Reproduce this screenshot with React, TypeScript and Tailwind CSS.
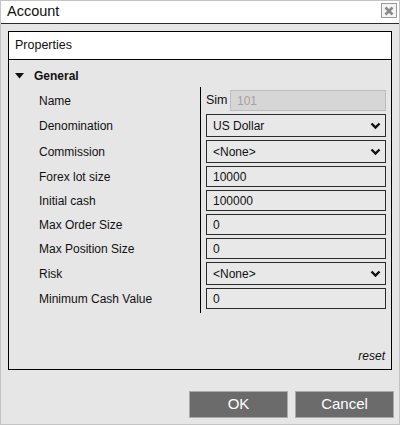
import React from 'react';

type Row = {
  label: string;
  kind: 'sim' | 'select' | 'input';
  value: string;
  pad: string;
};

const rows: Row[] = [
  { label: 'Name', kind: 'sim', value: '101', pad: 'pt-[3px]' },
  { label: 'Denomination', kind: 'select', value: 'US Dollar', pad: 'pt-[3px]' },
  { label: 'Commission', kind: 'select', value: '<None>', pad: 'pt-[3px]' },
  { label: 'Forex lot size', kind: 'input', value: '10000', pad: 'pt-[3px]' },
  { label: 'Initial cash', kind: 'input', value: '100000', pad: 'pt-[3px]' },
  { label: 'Max Order Size', kind: 'input', value: '0', pad: 'pt-[3px]' },
  { label: 'Max Position Size', kind: 'input', value: '0', pad: 'pt-[3px]' },
  { label: 'Risk', kind: 'select', value: '<None>', pad: 'pt-[3px]' },
  { label: 'Minimum Cash Value', kind: 'input', value: '0', pad: 'pt-[3px] pb-[4px]' },
];

function Chevron() {
  return (
    <svg width="11" height="8" viewBox="0 0 11 8" className="mr-[4px]">
      <polyline points="1.5,1.5 5.5,5.5 9.5,1.5" fill="none" stroke="#111" strokeWidth="2.4" />
    </svg>
  );
}

function Field({ row }: { row: Row }) {
  if (row.kind === 'sim') {
    return (
      <div className="flex items-center">
        <span className="w-[24px] text-[12.5px] text-[#111]">Sim</span>
        <div className="flex h-[21px] flex-1 items-center border border-[#bdbdbd] bg-[#d6d6d6] pl-[6px] text-[12px] text-[#a3a3a3]">
          {row.value}
        </div>
      </div>
    );
  }
  if (row.kind === 'select') {
    return (
      <div className="flex h-[23px] items-center justify-between border border-[#2b2b2b] bg-[#e8e8e8] pl-[6px] text-[12px] text-[#111]">
        <span>{row.value}</span>
        <Chevron />
      </div>
    );
  }
  return (
    <div className="flex h-[21px] items-center border border-[#2b2b2b] bg-[#e8e8e8] pl-[6px] text-[12px] text-[#111]">
      {row.value}
    </div>
  );
}

export default function App() {
  return (
    <div
      className="flex h-[425px] w-[400px] flex-col border border-[#c4c4c4] bg-[#e6e6e6]"
      style={{ fontFamily: '"Liberation Sans", Arial, sans-serif' }}
    >
      <div className="flex h-[23px] shrink-0 items-center justify-between border-b border-[#2b2b2b] bg-white pl-[6px] pr-[2px]">
        <span className="text-[14.5px] text-[#111]">Account</span>
        <div className="mb-[3px] flex h-[15px] w-[16px] items-center justify-center border border-[#9a9a9a] bg-[#f4f4f4]">
          <svg width="10" height="10" viewBox="0 0 10 10">
            <path d="M1.5 1.5 L8.5 8.5 M8.5 1.5 L1.5 8.5" stroke="#8a8a8a" strokeWidth="2.6" />
          </svg>
        </div>
      </div>

      <div className="px-[7px] pt-[7px]">
        <div className="flex h-[339px] flex-col border border-black">
          <div className="flex h-[28px] shrink-0 items-center border-b border-black bg-white pl-[6px] text-[12.5px] text-[#111]">
            Properties
          </div>

          <div className="mt-[4px] flex h-[23px] items-center pl-[6px]">
            <svg width="9" height="6" viewBox="0 0 9 6" className="mr-[10px]">
              <polygon points="0,0 9,0 4.5,5.5" fill="#111" />
            </svg>
            <span className="text-[12px] font-bold text-[#111]">General</span>
          </div>

          <div className="flex flex-col">
            {rows.map((row) => (
              <div key={row.label} className="flex">
                <div className={`flex w-[191px] shrink-0 items-center pl-[30px] text-[12px] text-[#111] ${row.pad}`}>
                  {row.label}
                </div>
                <div className={`flex-1 border-l border-black pl-[5px] pr-[5px] ${row.pad}`}>
                  <Field row={row} />
                </div>
              </div>
            ))}
          </div>

          <div className="flex-1" />
          <div className="pb-[4px] pr-[6px] text-right text-[12px] italic text-[#111]">reset</div>
        </div>
      </div>

      <div className="mt-[21px] flex justify-end gap-[7px] pr-[5px]">
        <button className="flex h-[27px] w-[99px] items-center justify-center border border-[#a9a9a9] bg-[#6b6b6b] text-[15px] text-white">
          OK
        </button>
        <button className="flex h-[27px] w-[99px] items-center justify-center border border-[#a9a9a9] bg-[#6b6b6b] text-[15px] text-white">
          Cancel
        </button>
      </div>
    </div>
  );
}
